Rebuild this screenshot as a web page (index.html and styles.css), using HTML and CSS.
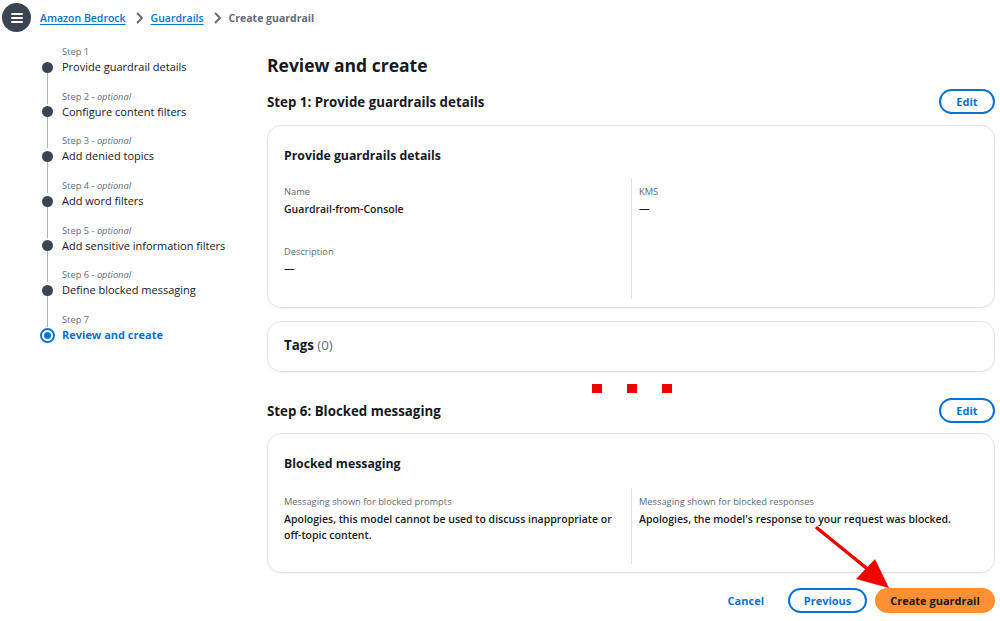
FILE: index.html
```html
<!DOCTYPE html>
<html>
<head>
<meta charset="utf-8">
<link rel="stylesheet" href="styles.css">
</head>
<body>
<div class="page">
  <header class="topbar">
    <button class="menu" aria-label="Menu">
      <svg width="12" height="10" viewBox="0 0 12 10"><rect x="0" y="0" width="12" height="2" rx="1" fill="#fff"/><rect x="0" y="4" width="12" height="2" rx="1" fill="#fff"/><rect x="0" y="8" width="12" height="2" rx="1" fill="#fff"/></svg>
    </button>
    <nav class="crumbs">
      <a class="crumb-link">Amazon Bedrock</a>
      <svg class="chev" width="8" height="12" viewBox="0 0 8 12"><path d="M1.5 1.5 L6 6 L1.5 10.5" fill="none" stroke="#5f6b7a" stroke-width="1.8" stroke-linecap="round" stroke-linejoin="round"/></svg>
      <a class="crumb-link">Guardrails</a>
      <svg class="chev" width="8" height="12" viewBox="0 0 8 12"><path d="M1.5 1.5 L6 6 L1.5 10.5" fill="none" stroke="#5f6b7a" stroke-width="1.8" stroke-linecap="round" stroke-linejoin="round"/></svg>
      <span class="crumb-current">Create guardrail</span>
    </nav>
  </header>

  <div class="layout">
    <aside class="steps">
      <div class="step first">
        <div class="rail-top"></div><div class="step-label">Step 1</div>
        <div class="rail"><span class="dot"></span><span class="line"></span></div><div class="step-title">Provide guardrail details</div>
      </div>
      <div class="step">
        <div class="rail-top"></div><div class="step-label">Step 2 - <i>optional</i></div>
        <div class="rail"><span class="dot"></span><span class="line"></span></div><div class="step-title">Configure content filters</div>
      </div>
      <div class="step">
        <div class="rail-top"></div><div class="step-label">Step 3 - <i>optional</i></div>
        <div class="rail"><span class="dot"></span><span class="line"></span></div><div class="step-title">Add denied topics</div>
      </div>
      <div class="step">
        <div class="rail-top"></div><div class="step-label">Step 4 - <i>optional</i></div>
        <div class="rail"><span class="dot"></span><span class="line"></span></div><div class="step-title">Add word filters</div>
      </div>
      <div class="step">
        <div class="rail-top"></div><div class="step-label">Step 5 - <i>optional</i></div>
        <div class="rail"><span class="dot"></span><span class="line"></span></div><div class="step-title">Add sensitive information filters</div>
      </div>
      <div class="step">
        <div class="rail-top"></div><div class="step-label">Step 6 - <i>optional</i></div>
        <div class="rail"><span class="dot"></span><span class="line"></span></div><div class="step-title">Define blocked messaging</div>
      </div>
      <div class="step last active">
        <div class="rail-top"></div><div class="step-label">Step 7</div>
        <div class="rail"><span class="ring"><span class="ring-dot"></span></span></div><div class="step-title">Review and create</div>
      </div>
    </aside>

    <main class="main">
      <h1 class="page-title">Review and create</h1>

      <div class="section-head">
        <h2 class="section-title">Step 1: Provide guardrails details</h2>
        <button class="btn-outline">Edit</button>
      </div>
      <section class="card">
        <h3 class="card-title">Provide guardrails details</h3>
        <div class="cols tall">
          <div class="col">
            <div class="kv">
              <div class="k">Name</div>
              <div class="v">Guardrail-from-Console</div>
            </div>
            <div class="kv kv-gap">
              <div class="k">Description</div>
              <div class="v">—</div>
            </div>
          </div>
          <div class="col col-right">
            <div class="kv">
              <div class="k">KMS</div>
              <div class="v">—</div>
            </div>
          </div>
        </div>
      </section>

      <section class="card card-tags">
        <h3 class="card-title tags-title">Tags <span class="count">(0)</span></h3>
      </section>

      <div class="dots-marker">
        <span class="sq"></span><span class="sq"></span><span class="sq"></span>
      </div>

      <div class="section-head after-marker">
        <h2 class="section-title">Step 6: Blocked messaging</h2>
        <button class="btn-outline">Edit</button>
      </div>
      <section class="card">
        <h3 class="card-title">Blocked messaging</h3>
        <div class="cols short">
          <div class="col">
            <div class="kv">
              <div class="k">Messaging shown for blocked prompts</div>
              <div class="v">Apologies, this model cannot be used to discuss inappropriate or off-topic content.</div>
            </div>
          </div>
          <div class="col col-right">
            <div class="kv">
              <div class="k">Messaging shown for blocked responses</div>
              <div class="v">Apologies, the model's response to your request was blocked.</div>
            </div>
          </div>
        </div>
      </section>

      <div class="actions">
        <button class="btn-link">Cancel</button>
        <button class="btn-outline btn-prev">Previous</button>
        <button class="btn-primary">Create guardrail</button>
      </div>
    </main>
  </div>

  <svg class="annotation" width="1000" height="621" viewBox="0 0 1000 621">
    <line x1="817" y1="528" x2="870" y2="571" stroke="#f20000" stroke-width="3.5" stroke-linecap="round"/>
    <polygon points="889,588 856,579 875,559" fill="#f20000"/>
  </svg>
</div>
</body>
</html>
```

FILE: styles.css
```css
* { box-sizing: border-box; }
html, body { margin: 0; padding: 0; background: #ffffff; }
body {
  font-family: "Open Sans", "Noto Sans", "Liberation Sans", sans-serif;
  color: #16191f;
  font-size: 11px;
}
.page { position: relative; width: 1000px; height: 621px; overflow: hidden; }

.topbar {
  display: flex;
  align-items: center;
  height: 34px;
  padding: 1px 0 0 2px;
}
.menu {
  width: 29px; height: 29px;
  border-radius: 50%;
  border: none;
  background: #3b4552;
  display: flex; align-items: center; justify-content: center;
  padding: 0;
}
.crumbs {
  display: flex; align-items: center;
  margin-left: 9px;
  font-size: 10.5px;
  font-weight: 600;
}
.crumb-link {
  color: #0972d3;
  text-decoration: underline;
  text-underline-offset: 2px;
}
.chev { margin: 0 7px 0 10px; }
.crumb-current { color: #5f6b7a; font-weight: 700; }

.layout {
  display: flex;
  padding-top: 11px;
}
.steps {
  width: 267px;
  padding-left: 41px;
  flex-shrink: 0;
}
.step {
  display: grid;
  grid-template-columns: 12px 1fr;
  column-gap: 9px;
}
.rail-top {
  background: linear-gradient(#aab4c0, #aab4c0) no-repeat center / 1px 100%;
}
.step.first .rail-top { background: none; }
.step-label {
  font-size: 9.3px;
  line-height: 14px;
  color: #5f6b7a;
}
.step-label i { font-style: italic; }
.rail {
  display: flex;
  flex-direction: column;
  align-items: center;
}
.dot {
  width: 11px; height: 11px;
  border-radius: 50%;
  background: #3b4552;
  margin-top: 2.5px;
  flex-shrink: 0;
}
.line {
  flex: 1;
  width: 1px;
  background: #aab4c0;
}
.step-title {
  font-size: 11px;
  line-height: 16px;
  padding-bottom: 14.7px;
  color: #16191f;
}
.step.active .step-title { color: #0972d3; font-weight: 700; }
.ring {
  width: 15px; height: 15px;
  border-radius: 50%;
  border: 2px solid #0972d3;
  background: #fff;
  display: flex; align-items: center; justify-content: center;
  margin-top: 0.5px;
}
.ring-dot {
  width: 7px; height: 7px;
  border-radius: 50%;
  background: #0972d3;
}

.main {
  width: 728px;
  display: flex;
  flex-direction: column;
}
.page-title {
  margin: 0;
  font-size: 17.5px;
  line-height: 24px;
  font-weight: 700;
  padding-top: 8px;
}
.section-head {
  display: flex;
  align-items: center;
  justify-content: space-between;
  height: 25px;
  margin-top: 12px;
  margin-bottom: 11px;
}
.section-head.after-marker { margin-top: 5px; margin-bottom: 10px; }
.section-title {
  margin: 0;
  font-size: 13.3px;
  font-weight: 700;
}
.btn-outline {
  height: 25px;
  min-width: 56px;
  padding: 0 14px;
  border-radius: 13px;
  border: 2px solid #0972d3;
  background: #fff;
  color: #0972d3;
  font-family: inherit;
  font-size: 11px;
  font-weight: 700;
}

.card {
  border: 1px solid #dfe3e8;
  border-radius: 14px;
  padding: 20px 16px 8px;
  box-shadow: 0 1px 2px rgba(0, 27, 55, 0.06);
}
.card-title {
  margin: 0;
  font-size: 12.3px;
  line-height: 20px;
  font-weight: 700;
}
.cols {
  display: grid;
  grid-template-columns: 1fr 1fr;
  margin-top: 12px;
}
.cols.tall { height: 121px; }
.cols.short { height: 76px; margin-top: 14px; }
.col { padding-top: 7px; }
.col-right {
  border-left: 1px solid #dfe3e8;
  padding-left: 7px;
}
.kv-gap { margin-top: 28px; }
.k {
  font-size: 9.3px;
  line-height: 14px;
  color: #5f6b7a;
}
.v {
  margin-top: 2px;
  font-size: 10.5px;
  line-height: 16px;
  font-weight: 600;
  padding-right: 10px;
}

.card-tags {
  margin-top: 13px;
  height: 51px;
  padding: 0 16px 4px;
  display: flex;
  align-items: center;
}
.tags-title { font-size: 13.3px; }
.count { color: #5f6b7a; font-weight: 400; }

.dots-marker {
  display: flex;
  justify-content: center;
  gap: 25px;
  height: 9px;
  margin-top: 12px;
  padding-left: 2px;
}
.sq {
  width: 10px; height: 9px;
  background: #f20000;
  flex-shrink: 0;
}

.actions {
  display: flex;
  justify-content: flex-end;
  align-items: center;
  margin-top: 15px;
}
.btn-link {
  background: none;
  border: none;
  color: #0972d3;
  font-family: inherit;
  font-size: 11px;
  font-weight: 700;
  padding: 0;
  margin-right: 24px;
}
.btn-prev { width: 79px; padding: 0; }
.btn-primary {
  margin-left: 8px;
  height: 25px;
  width: 120px;
  border-radius: 13px;
  border: none;
  background: #ff9033;
  color: #16191f;
  font-family: inherit;
  font-size: 11px;
  font-weight: 700;
}

.annotation {
  position: absolute;
  left: 0; top: 0;
  pointer-events: none;
}
```
